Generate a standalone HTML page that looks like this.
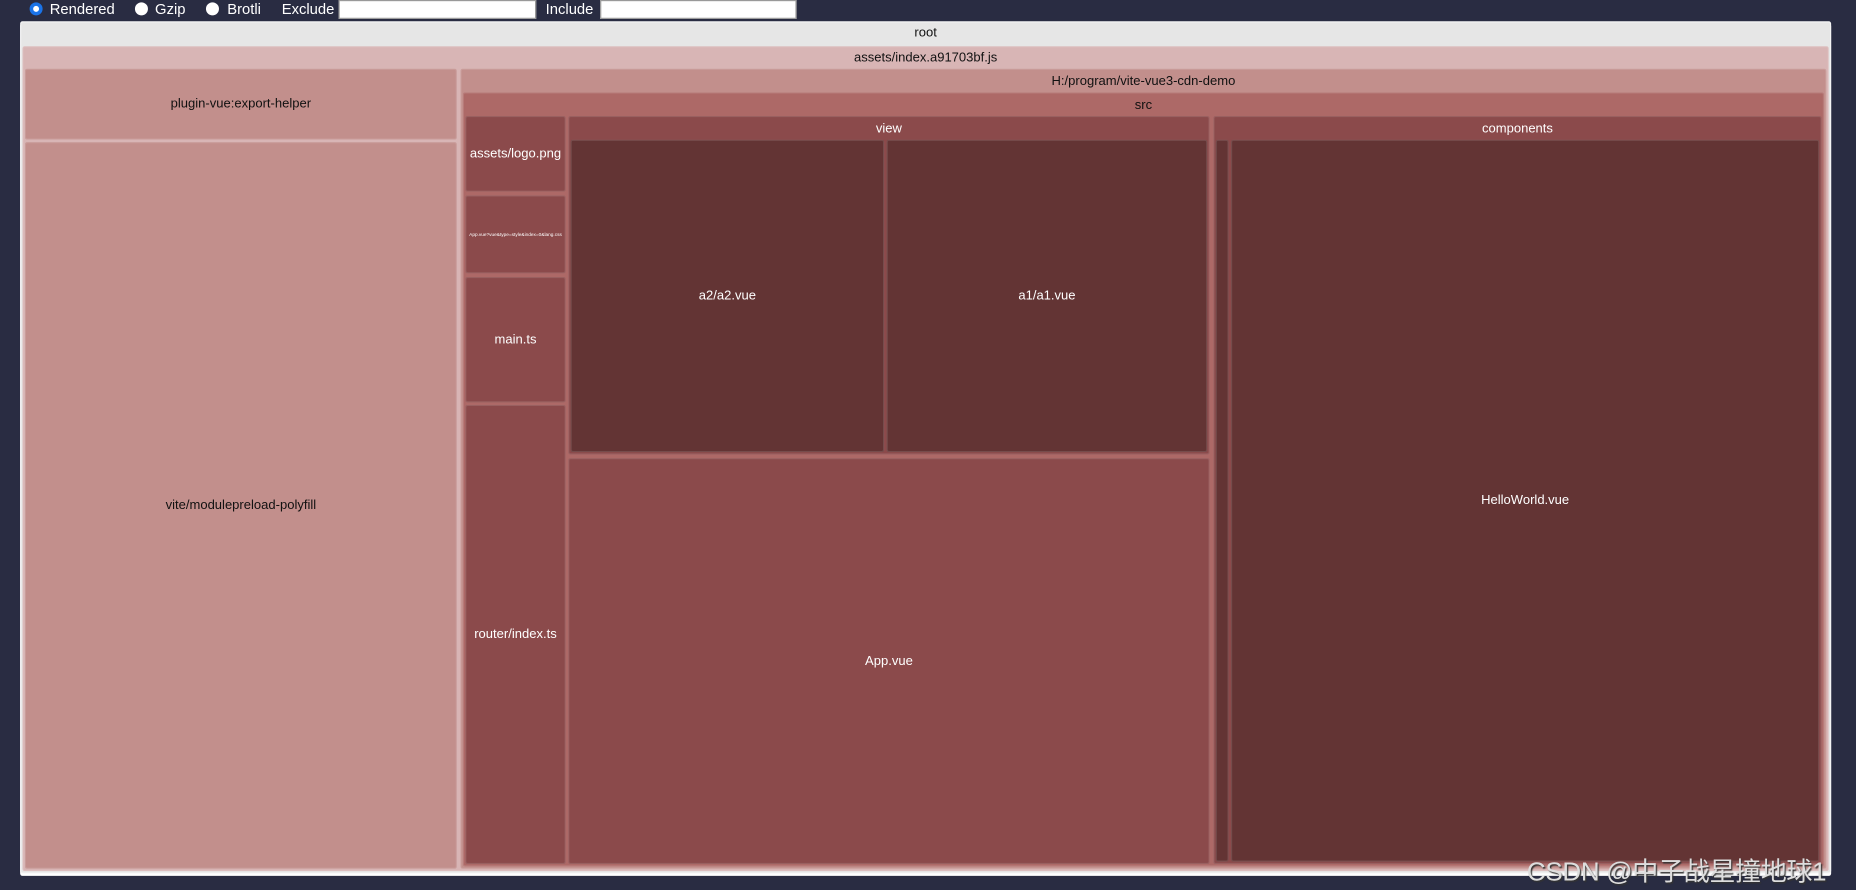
<!DOCTYPE html>
<html><head><meta charset="utf-8">
<style>
html,body{margin:0;padding:0;width:1856px;height:890px;overflow:hidden;background:#292c42;}
#w{position:absolute;left:0;top:0;width:1568px;height:752px;transform:scale(1.18367);transform-origin:0 0;font-family:"Liberation Sans","Noto Sans CJK SC",sans-serif;font-size:11px;}
.b{position:absolute;box-sizing:border-box;border-radius:2px;border:1px solid rgba(255,255,255,0.12);}
.h{position:absolute;left:0;right:0;top:0;height:20px;line-height:20px;text-align:center;}
.c{position:absolute;left:0;right:0;top:50%;transform:translateY(-50%);text-align:center;}
.d{color:#111}.l{color:#fff}
#top{position:absolute;left:0;top:0;height:17px;color:#fff;font-size:12.5px;}
#top span{position:absolute;top:1px;white-space:nowrap}
.r{position:absolute;top:2px;width:11px;height:11px;border-radius:50%;background:#fff;box-sizing:border-box}
.inp{position:absolute;top:0;height:16px;background:#fff;border:1px solid #999;box-sizing:border-box}
#wm{position:absolute;left:1290px;top:719px;font-size:22px;color:#ddd;text-shadow:1px 1px 1px #333;white-space:nowrap;letter-spacing:-0.3px}
</style></head><body><div id="w">
<div id="top">
<div class="r" style="left:25px;border:3px solid #1a73e8;"></div><span style="left:42px">Rendered</span>
<div class="r" style="left:114px"></div><span style="left:131px">Gzip</span>
<div class="r" style="left:174px"></div><span style="left:192px">Brotli</span>
<span style="left:238px">Exclude</span><div class="inp" style="left:286px;width:167px"></div>
<span style="left:461px">Include</span><div class="inp" style="left:507px;width:166px"></div>
</div>
<div class="b" style="left:17px;top:18px;width:1530px;height:720px;background:#e6e6e6;border-color:#f4f4f4;box-shadow:0 2px 0 #fff"><div class="h d" style="height:19px;line-height:19px">root</div></div>
<div class="b" style="left:19px;top:39px;width:1526px;height:697px;background:#d8b5b5;"><div class="h d" style="height:19px;line-height:19px">assets/index.a91703bf.js</div></div>
<div class="b" style="left:21px;top:58px;width:365px;height:60px;background:#c28f8c;"><div class="c d">plugin-vue:export-helper</div></div>
<div class="b" style="left:21px;top:120px;width:365px;height:614px;background:#c28f8c;"><div class="c d">vite/modulepreload-polyfill</div></div>
<div class="b" style="left:389px;top:58px;width:1154px;height:676px;background:#c28f8c;"><div class="h d">H:/program/vite-vue3-cdn-demo</div></div>
<div class="b" style="left:391px;top:78px;width:1150px;height:654px;background:#ad6967;"><div class="h d">src</div></div>
<div class="b" style="left:393px;top:98px;width:85px;height:64px;background:#8b4a4b;"><div class="c l">assets/logo.png</div></div>
<div class="b" style="left:393px;top:165px;width:85px;height:66px;background:#8b4a4b;"><div class="c l" style="font-size:4px;white-space:nowrap;overflow:hidden">App.vue?vue&amp;type=style&amp;index=0&amp;lang.css</div></div>
<div class="b" style="left:393px;top:234px;width:85px;height:106px;background:#8b4a4b;"><div class="c l">main.ts</div></div>
<div class="b" style="left:393px;top:342px;width:85px;height:388px;background:#8b4a4b;"><div class="c l">router/index.ts</div></div>
<div class="b" style="left:480px;top:98px;width:542px;height:286px;background:#8b4a4b;"><div class="h l">view</div></div>
<div class="b" style="left:482px;top:118px;width:265px;height:264px;background:#633434;"><div class="c l">a2/a2.vue</div></div>
<div class="b" style="left:749px;top:118px;width:271px;height:264px;background:#633434;"><div class="c l">a1/a1.vue</div></div>
<div class="b" style="left:480px;top:387px;width:542px;height:343px;background:#8b4a4b;"><div class="c l">App.vue</div></div>
<div class="b" style="left:1025px;top:98px;width:514px;height:632px;background:#8b4a4b;"><div class="h l">components</div></div>
<div class="b" style="left:1027px;top:118px;width:11px;height:610px;background:#633434;"></div>
<div class="b" style="left:1040px;top:118px;width:497px;height:610px;background:#633434;"><div class="c l">HelloWorld.vue</div></div>
<div id="wm">CSDN @中子战星撞地球1</div>
</div></body></html>
